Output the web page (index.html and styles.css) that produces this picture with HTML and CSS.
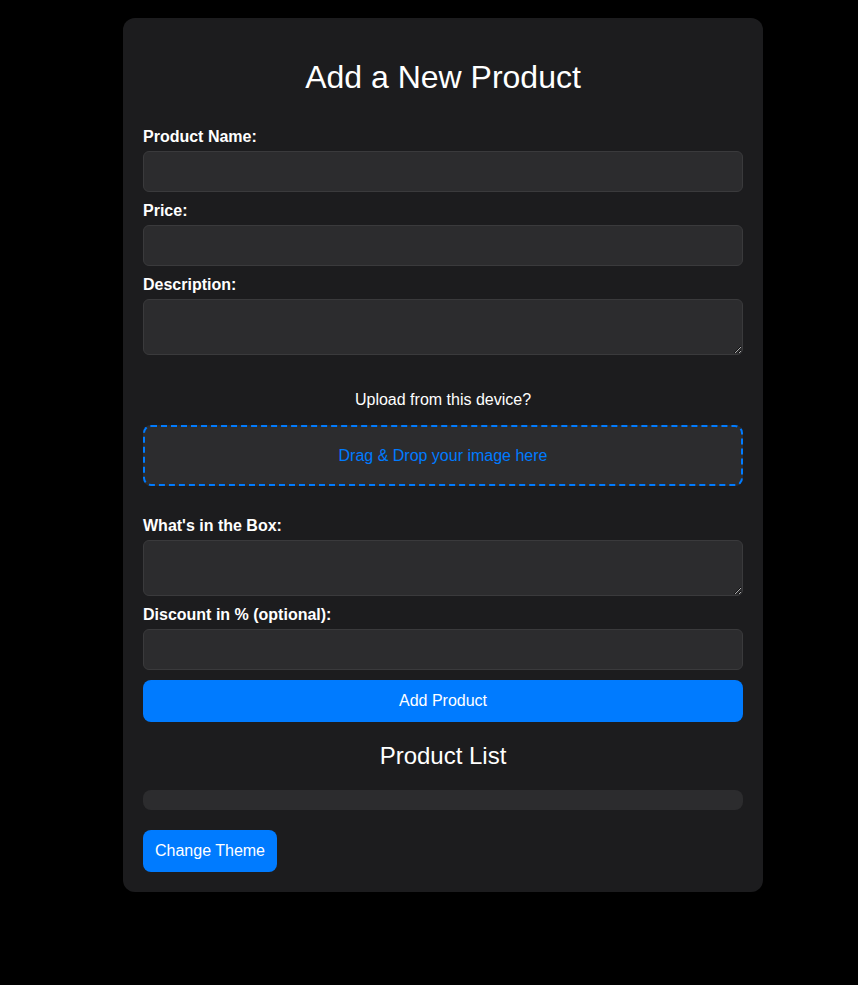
FILE: index.html
```html
<!DOCTYPE html>
<html lang="en">
<head>
<meta charset="utf-8">
<title>Add a New Product</title>
<link rel="stylesheet" href="styles.css">
</head>
<body>
<main class="card">
  <h1 class="title">Add a New Product</h1>
  <form class="form">
    <label class="label" for="name">Product Name:</label>
    <input class="field" id="name" type="text">
    <label class="label" for="price">Price:</label>
    <input class="field" id="price" type="text">
    <label class="label" for="desc">Description:</label>
    <textarea class="field area" id="desc"></textarea>
    <p class="upload-q">Upload from this device?</p>
    <div class="dropzone">Drag &amp; Drop your image here</div>
    <label class="label" for="box">What's in the Box:</label>
    <textarea class="field area" id="box"></textarea>
    <label class="label" for="disc">Discount in % (optional):</label>
    <input class="field" id="disc" type="text">
    <button class="btn btn-full" type="button">Add Product</button>
  </form>
  <h2 class="subtitle">Product List</h2>
  <div class="product-list"></div>
  <button class="btn" type="button">Change Theme</button>
</main>
</body>
</html>
```

FILE: styles.css
```css
html, body {
  margin: 0;
  padding: 0;
  background: #000;
}

body {
  font-family: "Liberation Sans", Arial, sans-serif;
  font-size: 16px;
  color: #fff;
  padding: 18px 0 93px 0;
}

.card {
  width: 600px;
  margin-left: 123px;
  padding: 20px;
  background: #1c1c1e;
  border-radius: 12px;
}

.title {
  font-size: 32px;
  font-weight: normal;
  text-align: center;
  margin: 21px 0 32px;
}

.form {
  display: flex;
  flex-direction: column;
}

.label {
  display: block;
  font-weight: bold;
  margin-bottom: 5px;
}

.field {
  box-sizing: border-box;
  width: 100%;
  height: 41px;
  padding: 10px;
  margin: 0 0 10px;
  font-family: "Liberation Sans", Arial, sans-serif;
  font-size: 16px;
  color: #fff;
  background: #2c2c2e;
  border: 1px solid #3a3a3c;
  border-radius: 6px;
  outline: none;
}

.area {
  height: 56px;
  resize: vertical;
  color-scheme: dark;
}

.upload-q {
  text-align: center;
  margin: 26px 0 16px;
}

.dropzone {
  box-sizing: border-box;
  height: 61px;
  display: flex;
  align-items: center;
  justify-content: center;
  padding: 0 10px;
  border: 2px dashed #007bff;
  border-radius: 8px;
  background: #2c2c2e;
  color: #007bff;
  margin-bottom: 31px;
}

.btn {
  font-family: "Liberation Sans", Arial, sans-serif;
  font-size: 16px;
  color: #fff;
  background: #007bff;
  border: none;
  border-radius: 8px;
  padding: 12px;
  line-height: normal;
}

.btn-full {
  width: 100%;
}

.subtitle {
  font-size: 24px;
  font-weight: normal;
  text-align: center;
  margin: 20px 0 20px;
}

.product-list {
  height: 20px;
  background: #2c2c2e;
  border-radius: 8px;
  margin-bottom: 20px;
}
```
